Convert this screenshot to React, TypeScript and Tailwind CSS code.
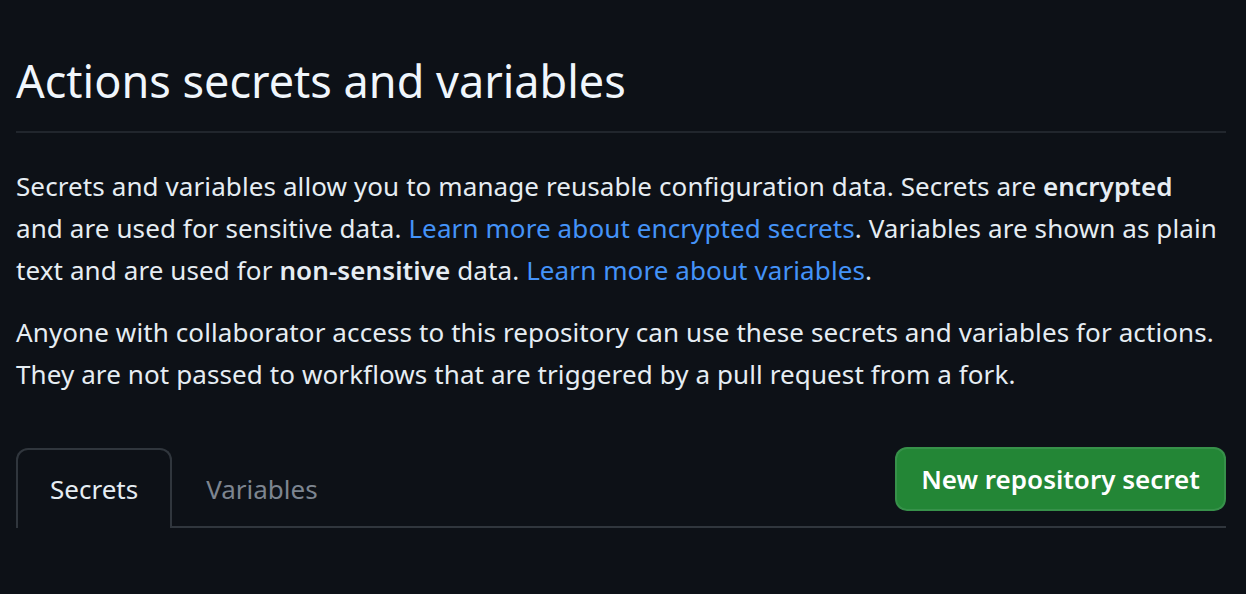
const font = "font-['Noto_Sans','Segoe_UI',sans-serif]";

function Link({ children }: { children: React.ReactNode }) {
  return <a className="text-[#4493f8] cursor-pointer hover:underline">{children}</a>;
}

function Tabs() {
  return (
    <div className="flex items-end justify-between border-b-2 border-[#30363d]">
      <nav className="flex -mb-[2px]">
        <div className="h-[80px] flex items-center px-[32px] border-2 border-b-0 border-[#30363d] rounded-t-xl bg-[#0d1117] text-[26px] text-[#e6edf3]">
          Secrets
        </div>
        <div className="h-[80px] flex items-center px-[34px] pt-[4px] text-[26px] text-[#7d8590] border-b-2 border-[#30363d]">
          Variables
        </div>
      </nav>
      <button className="mb-[15px] h-[64px] w-[331px] rounded-xl bg-[#238636] border-2 border-[#f0f6fc]/10 text-white text-[26px] font-semibold">
        New repository secret
      </button>
    </div>
  );
}

export default function App() {
  return (
    <div className={`min-h-screen bg-[#0d1117] ${font} pl-4 pr-5 pt-[45px]`}>
      <div className="pb-[14px] border-b-2 border-[#21262d] mb-8">
        <h2 className="text-[45px] leading-[72px] font-normal text-[#f0f6fc]">Actions secrets and variables</h2>
      </div>
      <div className="text-[26px] leading-[42px] text-[#e6edf3] tracking-[0.1px]">
        <p className="mb-5">
          Secrets and variables allow you to manage reusable configuration data. Secrets are{" "}
          <strong className="font-semibold">encrypted</strong>
          <br />
          and are used for sensitive data. <Link>Learn more about encrypted secrets</Link>. Variables are shown as plain
          <br />
          text and are used for <strong className="font-semibold">non-sensitive</strong> data.{" "}
          <Link>Learn more about variables</Link>.
        </p>
        <p className="mb-[52px]">
          Anyone with collaborator access to this repository can use these secrets and variables for actions.
          <br />
          They are not passed to workflows that are triggered by a pull request from a fork.
        </p>
      </div>
      <Tabs />
    </div>
  );
}
